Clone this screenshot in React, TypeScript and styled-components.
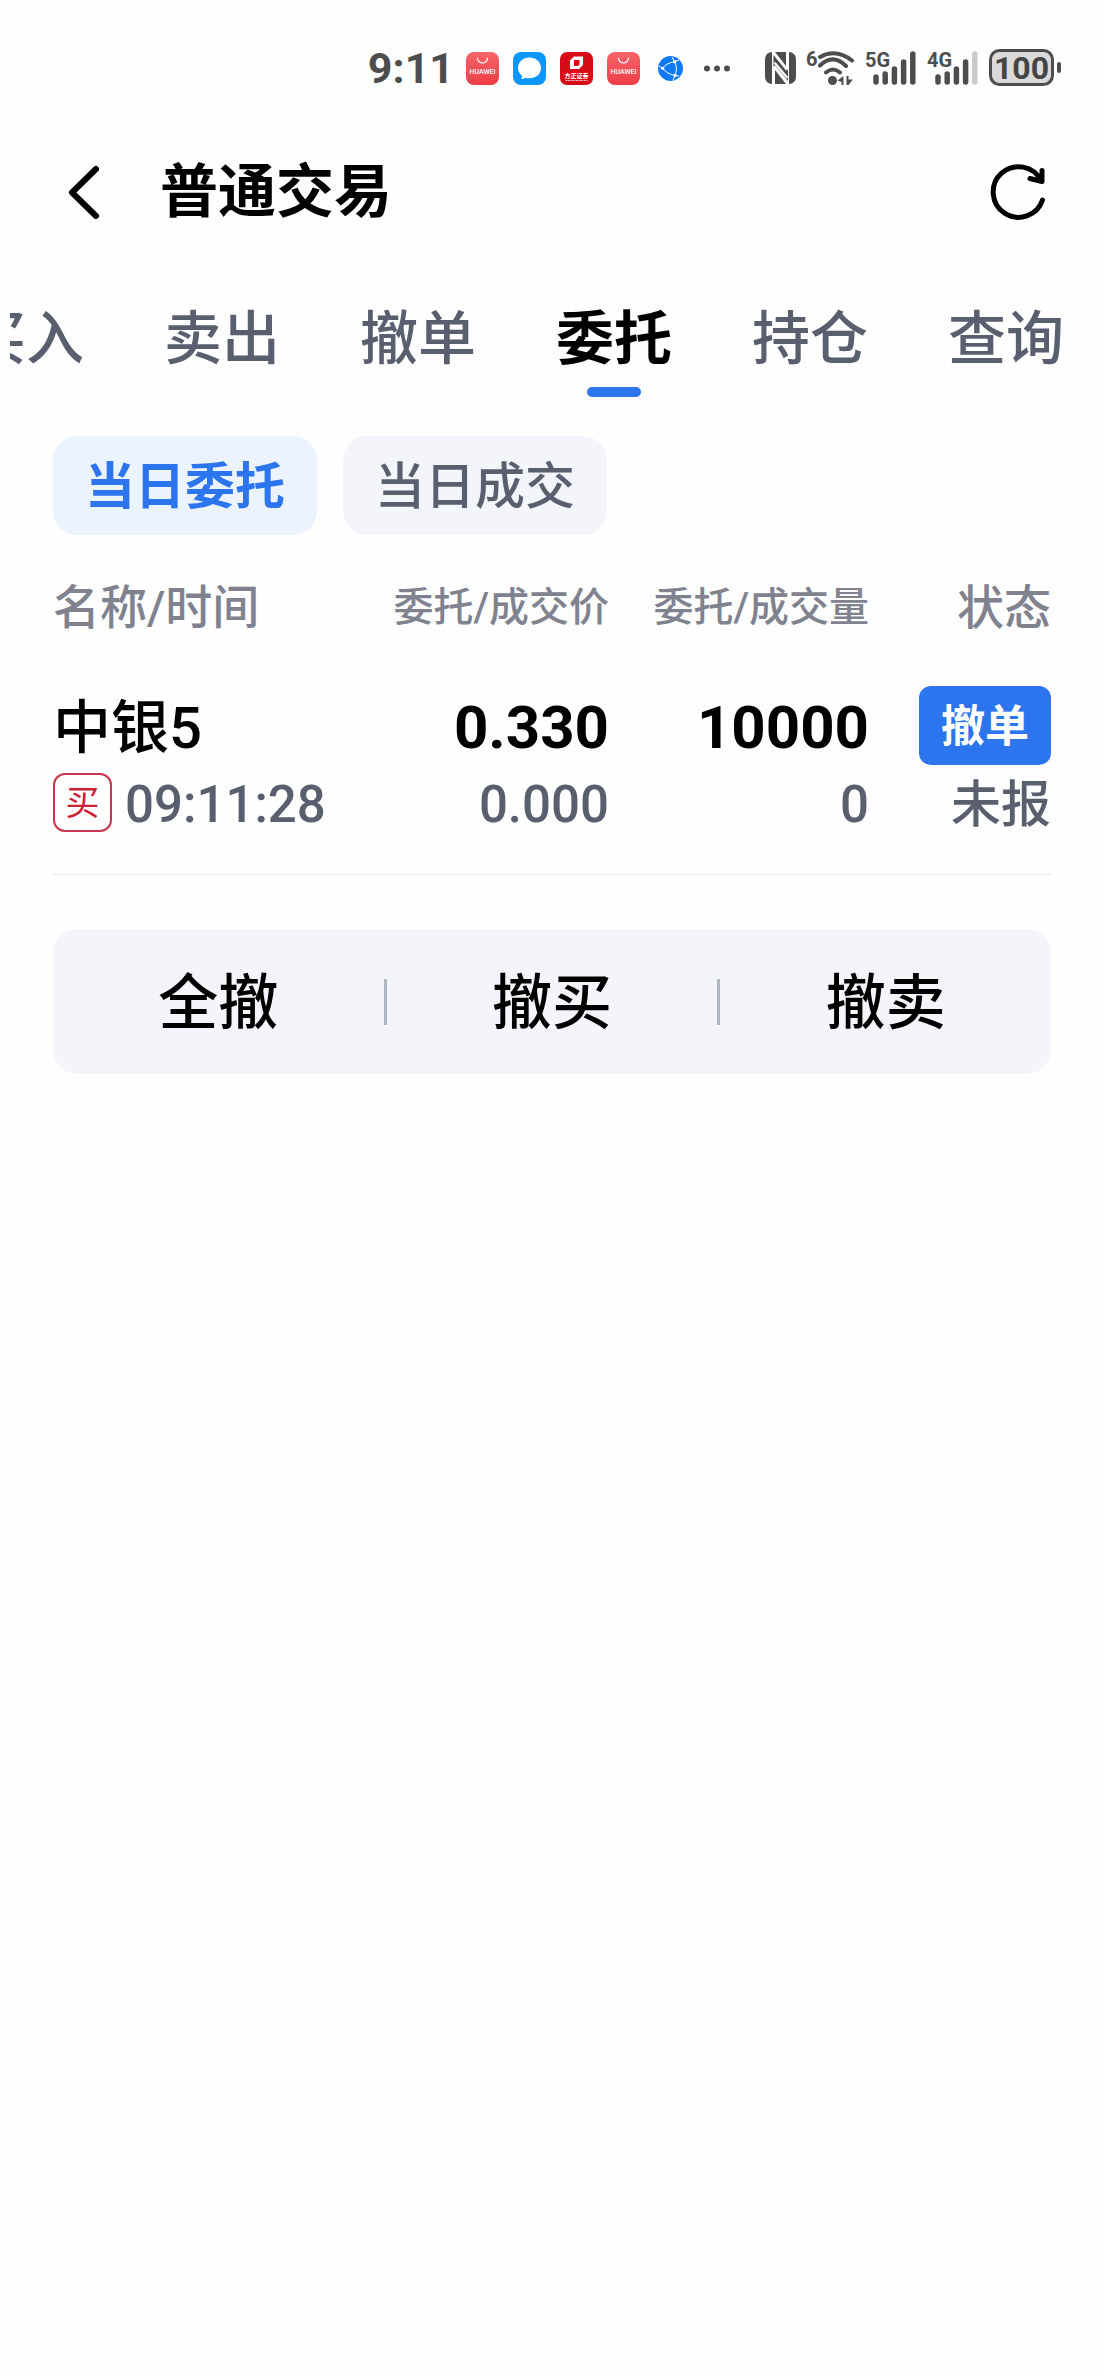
import React, { useState } from "react";
import styled, { createGlobalStyle } from "styled-components";

const FONT = `Roboto, "Noto Sans CJK SC", sans-serif`;
const INK = "#4d4d4d";

const GlobalStyle = createGlobalStyle`
  *, *::before, *::after { box-sizing: border-box; }
  body { margin: 0; background: #fefefe; font-family: ${FONT}; color: #000; }
  button { border: 0; padding: 0; background: none; font: inherit; color: inherit; cursor: pointer; }
`;

const Page = styled.div`
  overflow: hidden;
`;

const StatusBar = styled.div`
  display: flex;
  align-items: center;
  justify-content: flex-end;
  height: 136px;
  padding-right: 42px;
  color: ${INK};
`;
const Clock = styled.time`
  font-size: 43px;
  line-height: 48px;
  font-weight: 700;
  margin-right: 12px;
`;
const Apps = styled.div`
  display: flex;
  align-items: center;
  gap: 14px;
  margin-right: 34px;
`;
const Signals = styled.div`
  display: flex;
  align-items: center;
  gap: 10px;
`;
const Glyph = styled.svg`
  display: block;
  flex: none;
`;

const Header = styled.header`
  display: flex;
  align-items: center;
  height: 112px;
  padding: 0 53px;
`;
const IconButton = styled.button`
  display: flex;
  align-items: center;
  justify-content: center;
  height: 64px;
`;
const Title = styled.h1`
  flex: 1;
  margin: 0 0 0 43px;
  font-size: 58px;
  line-height: 80px;
  font-weight: 700;
`;

const TabStrip = styled.nav`
  display: flex;
  justify-content: flex-end;
  height: 164px;
  margin-left: 10px;
  overflow: hidden;
`;
const Tab = styled.button<{ $active: boolean }>`
  display: flex;
  flex: none;
  flex-direction: column;
  align-items: center;
  gap: 8px;
  width: 196px;
  padding-top: 51px;
  font-size: 58px;
  line-height: 80px;
  font-weight: ${(p) => (p.$active ? 700 : 500)};
  color: ${(p) => (p.$active ? "#000" : "#5a5f70")};
  &::after {
    content: "";
    width: 54px;
    height: 10px;
    border-radius: 5px;
    background: ${(p) => (p.$active ? "#2d75ee" : "transparent")};
  }
`;

const Content = styled.main`
  padding: 24px 53px 0;
`;
const Chips = styled.div`
  display: flex;
  gap: 26px;
`;
const Chip = styled.button<{ $active: boolean }>`
  height: 99px;
  padding: 2px 32px 0;
  border-radius: 24px;
  font-size: 50px;
  line-height: 72px;
  font-weight: ${(p) => (p.$active ? 700 : 500)};
  color: ${(p) => (p.$active ? "#2d75ee" : "#5a5f70")};
  background: ${(p) => (p.$active ? "#ebf3fe" : "#f4f5fa")};
`;

const Orders = styled.table`
  width: 100%;
  margin-top: 31px;
  table-layout: fixed;
  border-spacing: 0;
  border-bottom: 3px solid #f3f4f9;
`;
const HeadCell = styled.th<{ $width: string; $small?: boolean; $left?: boolean }>`
  width: ${(p) => p.$width};
  height: 84px;
  padding: 0;
  text-align: ${(p) => (p.$left ? "left" : "right")};
  white-space: nowrap;
  font-size: ${(p) => (p.$small ? 40 : 47)}px;
  line-height: 68px;
  font-weight: 500;
  color: #80838f;
`;
const Cell = styled.td`
  padding: 36px 0 32px;
  text-align: right;
  vertical-align: top;
  white-space: nowrap;
`;
const Primary = styled.div<{ $left?: boolean }>`
  display: flex;
  align-items: center;
  justify-content: ${(p) => (p.$left ? "flex-start" : "flex-end")};
  height: 79px;
  font-size: ${(p) => (p.$left ? 58 : 60)}px;
  line-height: 72px;
  font-weight: ${(p) => (p.$left ? 500 : 700)};
`;
const Secondary = styled.div<{ $left?: boolean }>`
  display: flex;
  align-items: center;
  justify-content: ${(p) => (p.$left ? "flex-start" : "flex-end")};
  gap: 13px;
  height: 75px;
  margin-bottom: 1px;
  font-size: 51px;
  line-height: 72px;
  font-weight: 500;
  color: #5a5f70;
`;
const Value = styled.span`
  padding-top: 4px;
`;
const State = styled(Value)`
  font-size: 50px;
`;
const Side = styled.span`
  display: flex;
  align-items: center;
  justify-content: center;
  width: 59px;
  height: 59px;
  border: 2px solid #c8354c;
  border-radius: 12px;
  font-size: 34px;
  line-height: 48px;
  font-weight: 400;
  color: #cc2039;
`;
const CancelButton = styled.button`
  height: 79px;
  padding: 2px 22px 0;
  border-radius: 12px;
  font-size: 44px;
  line-height: 64px;
  font-weight: 700;
  color: #fff;
  background: #2d75ee;
`;

const Actions = styled.div`
  display: flex;
  align-items: center;
  height: 145px;
  margin-top: 53px;
  border-radius: 24px;
  background: #f4f5fa;
`;
const Action = styled.button`
  flex: 1;
  padding-top: 4px;
  font-size: 60px;
  line-height: 88px;
  font-weight: 500;
`;
const Separator = styled.span`
  width: 3px;
  height: 46px;
  background: #b1b6c3;
`;

const MarketIcon = () => (
  <Glyph width="33" height="33" viewBox="0 0 33 33" aria-hidden="true">
    <defs>
      <linearGradient id="market" x1="0" y1="0" x2="0" y2="1">
        <stop offset="0" stopColor="#f8656a" />
        <stop offset="1" stopColor="#ee3d47" />
      </linearGradient>
    </defs>
    <rect width="33" height="33" rx="8" fill="url(#market)" />
    <path d="M11.5 6a5 5 0 0 0 10 0" fill="none" stroke="#fff" strokeWidth="1.2" strokeLinecap="round" />
    <text x="16.5" y="21.5" textAnchor="middle" fontFamily="Roboto, sans-serif" fontSize="7" fontWeight="500" fill="#fff">HUAWEI</text>
  </Glyph>
);
const ChatIcon = () => (
  <Glyph width="33" height="33" viewBox="0 0 33 33" aria-hidden="true">
    <rect width="33" height="33" rx="8" fill="#0a97ff" />
    <path d="M16.5 5.5C23 5.5 28 10 28 16s-5 10.3-11.5 10.3c-1.5 0-3-.2-4.2-.6-1 .8-2.4 1.3-4.300 1.300 1-1 1.300-2.200 1-3.300C6.500 21.800 5 19 5 16 5 10 10 5.500 16.500 5.500z" fill="#fff" />
  </Glyph>
);
const BrokerIcon = () => (
  <Glyph width="33" height="33" viewBox="0 0 33 33" aria-hidden="true">
    <rect width="33" height="33" rx="7" fill="#d60c18" />
    <path fillRule="evenodd" d="M14 4.5h9V13l-4 4h-9V8.500zM14 8v6h4l1.500-1.500V8z" fill="#fff" />
    <text x="16.5" y="26" textAnchor="middle" fontFamily='"Noto Sans CJK SC", sans-serif' fontSize="6" fontWeight="700" fill="#fff">方正证券</text>
    <path d="M5.500 28.500h22" stroke="#fff" strokeWidth="1" strokeDasharray="2 .6" opacity=".7" />
  </Glyph>
);
const GlobeIcon = () => (
  <Glyph width="33" height="33" viewBox="0 0 33 33" aria-hidden="true">
    <circle cx="16.5" cy="16.5" r="12.5" fill="#0f7af8" />
    <path d="M8.700 16.300Q12 11 20.700 9.700M8.700 16.300Q13 22 21 23.500M20.700 9.700Q24 16.500 21 23.500M20.700 9.700L18 5M20.700 9.700L25 8M8.700 16.300L4.500 14M21 23.500l-2 5M21 23.500l4 .5" fill="none" stroke="#fff" strokeWidth="1" />
    <g fill="#fff"><circle cx="20.700" cy="9.700" r="1.600" /><circle cx="8.700" cy="16.300" r="1.600" /><circle cx="21" cy="23.500" r="1.600" /></g>
  </Glyph>
);
const MoreIcon = () => (
  <Glyph width="30" height="33" viewBox="0 0 30 33" fill={INK} aria-hidden="true">
    <circle cx="6" cy="16.5" r="3" /><circle cx="16" cy="16.5" r="3" /><circle cx="26" cy="16.5" r="3" />
  </Glyph>
);
const NfcIcon = () => (
  <Glyph width="31" height="38" viewBox="0 0 31 38" aria-hidden="true">
    <rect y="3" width="31" height="32" rx="7" fill={INK} />
    <path d="M7 35V3h3l11 14V3h3v32h-3L10 21v14z" fill="#fefefe" />
    <path d="M8.500 35V6L21 21.500l2-1V32L10 16l-1.500 2z" fill={INK} />
    <path d="M9.500 13.500L22.500 29" stroke="#fefefe" strokeWidth="2" />
  </Glyph>
);
const WifiIcon = () => (
  <Glyph width="49" height="38" viewBox="0 0 49 38" aria-hidden="true">
    <text x="0" y="17" fontFamily="Roboto, sans-serif" fontSize="20" fontWeight="700" fill={INK}>6</text>
    <g fill="none" stroke={INK} strokeWidth="4" strokeLinecap="round">
      <path d="M14 8Q30-1 46 11.500M14 16.500Q27 4 40 17M20 23.500q7-6 14 0" />
    </g>
    <circle cx="26.500" cy="31.500" r="4.500" fill={INK} />
    <path d="M37.500 27v9h-2v-3l-4-1.500zM40.500 27h2v3.500h4.500L42.500 36h-2z" fill={INK} />
  </Glyph>
);
function CellIcon({ label, level }: { label: string; level: number }) {
  return (
    <Glyph width="52" height="38" viewBox="0 0 52 38" aria-hidden="true">
      <text x="0" y="18" fontFamily="Roboto, sans-serif" fontSize="20" fontWeight="700" fill={INK}>{label}</text>
      <g strokeWidth="5.5" strokeLinecap="round">
        {[28, 25, 20, 13, 5].map((top, i) => (
          <path key={top} d={`M${11 + i * 9.2} ${top}V33`} stroke={i < level ? INK : "#cbcbcb"} />
        ))}
      </g>
    </Glyph>
  );
}
const BatteryIcon = () => (
  <Glyph width="73" height="38" viewBox="0 0 73 38" role="img" aria-label="100%">
    <rect x="1.5" y="1.5" width="62" height="34" rx="9" fill="#dadada" stroke={INK} strokeWidth="3" />
    <rect x="68" y="13" width="4" height="11" rx="2" fill={INK} />
    <text x="32.5" y="30" textAnchor="middle" fontFamily="Roboto, sans-serif" fontSize="32" fontWeight="700" fill="#444">100</text>
  </Glyph>
);
const BackIcon = () => (
  <Glyph width="64" height="64" viewBox="0 0 64 64" fill="none" stroke="#000" strokeWidth="6" strokeLinecap="round" strokeLinejoin="round" aria-hidden="true">
    <path d="M43 9L19 32.5L43 56" />
  </Glyph>
);
const RefreshIcon = () => (
  <Glyph width="64" height="64" viewBox="0 0 64 64" fill="none" stroke="#000" strokeWidth="5" strokeLinecap="round" strokeLinejoin="round" aria-hidden="true">
    <path d="M55.500 40A25.300 25.300 0 1 1 54 20.500" />
    <path d="M55 10.500V21.500L43 18.500" />
  </Glyph>
);

const TABS = ["买入", "卖出", "撤单", "委托", "持仓", "查询"];
const CHIPS = ["当日委托", "当日成交"];
const ORDERS = [
  { name: "中银5", side: "买", time: "09:11:28", price: "0.330", dealPrice: "0.000", amount: "10000", dealAmount: "0", state: "未报" },
];

export default function App() {
  const [tab, setTab] = useState("委托");
  const [chip, setChip] = useState("当日委托");
  return (
    <Page>
      <GlobalStyle />
      <StatusBar>
        <Clock>9:11</Clock>
        <Apps>
          <MarketIcon /><ChatIcon /><BrokerIcon /><MarketIcon /><GlobeIcon /><MoreIcon />
        </Apps>
        <Signals>
          <NfcIcon /><WifiIcon /><CellIcon label="5G" level={5} /><CellIcon label="4G" level={4} /><BatteryIcon />
        </Signals>
      </StatusBar>
      <Header>
        <IconButton aria-label="返回"><BackIcon /></IconButton>
        <Title>普通交易</Title>
        <IconButton aria-label="刷新"><RefreshIcon /></IconButton>
      </Header>
      <TabStrip>
        {TABS.map((name) => (
          <Tab key={name} $active={name === tab} onClick={() => setTab(name)}>{name}</Tab>
        ))}
      </TabStrip>
      <Content>
        <Chips>
          {CHIPS.map((name) => (
            <Chip key={name} $active={name === chip} onClick={() => setChip(name)}>{name}</Chip>
          ))}
        </Chips>
        <Orders>
          <thead>
            <tr>
              <HeadCell $width="auto" $left>名称/时间</HeadCell>
              <HeadCell $width="260px" $small>委托/成交价</HeadCell>
              <HeadCell $width="260px" $small>委托/成交量</HeadCell>
              <HeadCell $width="182px">状态</HeadCell>
            </tr>
          </thead>
          <tbody>
            {ORDERS.map((o) => (
              <tr key={o.time}>
                <Cell>
                  <Primary $left><Value>{o.name}</Value></Primary>
                  <Secondary $left><Side>{o.side}</Side><Value>{o.time}</Value></Secondary>
                </Cell>
                <Cell>
                  <Primary><Value>{o.price}</Value></Primary>
                  <Secondary><Value>{o.dealPrice}</Value></Secondary>
                </Cell>
                <Cell>
                  <Primary><Value>{o.amount}</Value></Primary>
                  <Secondary><Value>{o.dealAmount}</Value></Secondary>
                </Cell>
                <Cell>
                  <Primary><CancelButton>撤单</CancelButton></Primary>
                  <Secondary><State>{o.state}</State></Secondary>
                </Cell>
              </tr>
            ))}
          </tbody>
        </Orders>
        <Actions>
          <Action>全撤</Action>
          <Separator />
          <Action>撤买</Action>
          <Separator />
          <Action>撤卖</Action>
        </Actions>
      </Content>
    </Page>
  );
}
